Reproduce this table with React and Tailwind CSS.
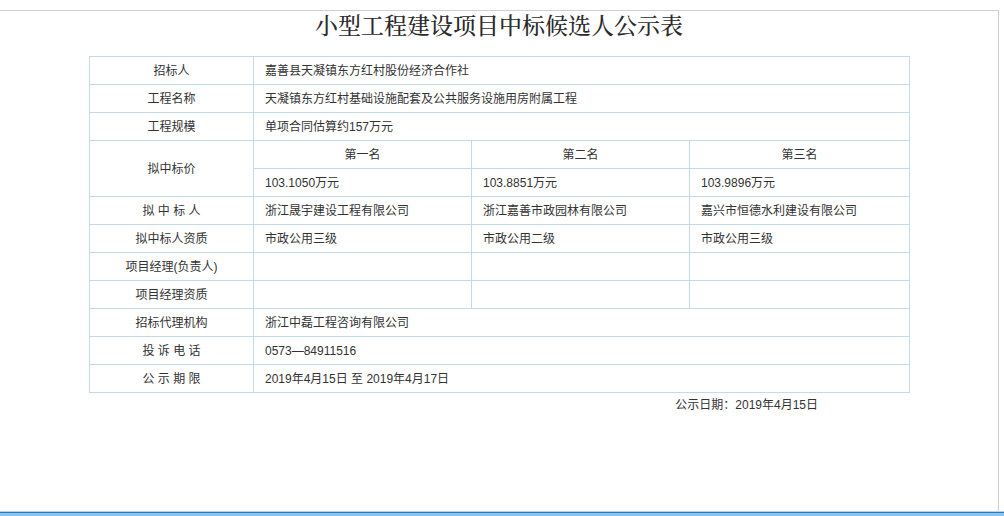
export default function App() {
  const font = { fontFamily: '"Liberation Sans", "Noto Sans CJK SC", sans-serif' };
  const td = "border border-[#c6d9ea] h-[28px] p-0 text-[12px] text-[#333]";
  const lab = td + " text-center";
  const val = td + " pl-[11px] text-left";
  return (
    <div className="w-[1004px] h-[516px] bg-white flex flex-col overflow-hidden" style={font}>
      <div className="mt-[10px] w-[999px] flex-1 border-t border-r border-[#cfcfcf] flex flex-col">
        <div
          className="h-[28px] leading-[28px] text-[23px] font-medium text-center text-[#2b2b2b] mb-[17px]"
          style={{ fontFamily: '"Noto Serif CJK SC", "Noto Sans CJK SC", serif' }}
        >
          小型工程建设项目中标候选人公示表
        </div>
        <div className="w-[820px] ml-[89px]">
          <table className="w-[820px] border-collapse table-fixed">
            <colgroup>
              <col className="w-[164px]" />
              <col className="w-[218px]" />
              <col className="w-[218px]" />
              <col className="w-[220px]" />
            </colgroup>
            <tbody>
              <tr>
                <td className={lab}>招标人</td>
                <td className={val} colSpan={3}>嘉善县天凝镇东方红村股份经济合作社</td>
              </tr>
              <tr>
                <td className={lab}>工程名称</td>
                <td className={val} colSpan={3}>天凝镇东方红村基础设施配套及公共服务设施用房附属工程</td>
              </tr>
              <tr>
                <td className={lab}>工程规模</td>
                <td className={val} colSpan={3}>单项合同估算约157万元</td>
              </tr>
              <tr>
                <td className={lab} rowSpan={2}>拟中标价</td>
                <td className={lab}>第一名</td>
                <td className={lab}>第二名</td>
                <td className={lab}>第三名</td>
              </tr>
              <tr>
                <td className={val}>103.1050万元</td>
                <td className={val}>103.8851万元</td>
                <td className={val}>103.9896万元</td>
              </tr>
              <tr>
                <td className={lab}>拟 中 标 人</td>
                <td className={val}>浙江晟宇建设工程有限公司</td>
                <td className={val}>浙江嘉善市政园林有限公司</td>
                <td className={val}>嘉兴市恒德水利建设有限公司</td>
              </tr>
              <tr>
                <td className={lab}>拟中标人资质</td>
                <td className={val}>市政公用三级</td>
                <td className={val}>市政公用二级</td>
                <td className={val}>市政公用三级</td>
              </tr>
              <tr>
                <td className={lab}>项目经理(负责人)</td>
                <td className={val}></td>
                <td className={val}></td>
                <td className={val}></td>
              </tr>
              <tr>
                <td className={lab}>项目经理资质</td>
                <td className={val}></td>
                <td className={val}></td>
                <td className={val}></td>
              </tr>
              <tr>
                <td className={lab}>招标代理机构</td>
                <td className={val} colSpan={3}>浙江中磊工程咨询有限公司</td>
              </tr>
              <tr>
                <td className={lab}>投 诉 电 话</td>
                <td className={val} colSpan={3}>0573—84911516</td>
              </tr>
              <tr>
                <td className={lab}>公 示 期 限</td>
                <td className={val} colSpan={3}>2019年4月15日 至 2019年4月17日</td>
              </tr>
            </tbody>
          </table>
          <div className="mt-[2px] leading-[20px] text-[12px] text-[#333] text-right pr-[91px]">
            公示日期：2019年4月15日
          </div>
        </div>
      </div>
      <div className="h-[1px] bg-[#b9d3e6]" />
      <div className="h-[1px] bg-[#1f7ccc]" />
      <div className="h-[3px] bg-[#8fc3ea]" />
    </div>
  );
}
